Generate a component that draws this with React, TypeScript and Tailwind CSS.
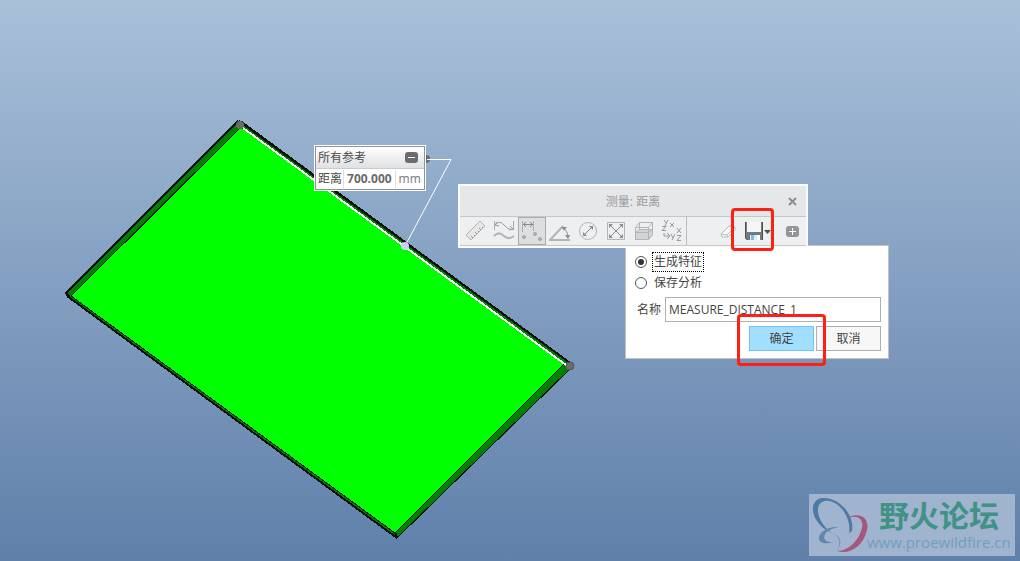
import { useState } from "react";
import type { ReactNode } from "react";
import clsx from "clsx";

type Tool = { id: string; label: string; icon: ReactNode };

const tools: Tool[] = [
  {
    id: "summary",
    label: "汇总",
    icon: (
      <>
        <path d="M1 15 L15 1 L20 6 L6 20 Z" fill="#e6e6e7" />
        <path d="M8 18l-2-2M10 16l-1-1M12 14l-2-2M14 12l-1-1M16 10l-2-2M18 8l-1-1" stroke="#999" />
      </>
    ),
  },
  {
    id: "length",
    label: "长度",
    icon: (
      <>
        <path d="M1.500 1v9M20.500 1v9" stroke="#aaa" />
        <path d="M2 5c4-4 6-3 9 0s5 5 9 4M2 5l4 1M2 5l2-3M20 9l-3-3M20 9l-4 1" stroke="#999" />
        <path d="M1 16c4-4 7-3 10 0s6 3 10 0" strokeWidth="2" />
      </>
    ),
  },
  {
    id: "distance",
    label: "距离",
    icon: (
      <>
        <path d="M1.500 1v11M12.500 1v10" stroke="#aaa" />
        <path d="M2 4.500h10M5 2L2.500 4.500 5 7M9 2l2.500 2.500L9 7" stroke="#888" />
        <g fill="#b5b5b5" stroke="#a4a4a4">
          <circle cx="3" cy="17" r="1.500" />
          <circle cx="14" cy="14" r="1.500" />
          <circle cx="19" cy="19" r="1.500" />
        </g>
      </>
    ),
  },
  {
    id: "angle",
    label: "角度",
    icon: (
      <>
        <path d="M14 6L1 20h20" strokeWidth="2" stroke="#b4b4b4" />
        <path d="M13 8c4 1 6 5 6 10" stroke="#8c8c8c" />
        <path d="M13 7h5l-3 4zM16 15h5l-2 4z" fill="#8c8c8c" stroke="none" />
      </>
    ),
  },
  {
    id: "diameter",
    label: "直径",
    icon: (
      <>
        <circle cx="11" cy="11" r="8.500" />
        <path d="M7 15l8-8" stroke="#888" />
        <path d="M6 16v-4l4 4zM16 6v4l-4-4z" fill="#8c8c8c" stroke="none" />
      </>
    ),
  },
  {
    id: "area",
    label: "面积",
    icon: (
      <>
        <path d="M2.500 2.500h17v17h-17z" />
        <path d="M5 5l12 12M17 5L5 17" stroke="#888" />
        <path d="M4 4h4L4 8zM18 4v4l-4-4zM4 18v-4l4 4zM18 18h-4l4-4z" fill="#8c8c8c" stroke="none" />
      </>
    ),
  },
  {
    id: "volume",
    label: "体积",
    icon: (
      <>
        <path d="M2.500 12.500l4-3h13v5l-4 5h-13z" fill="#d3d4d5" />
        <path d="M2.500 7.500h13v12h-13zM2.500 7.500l4-5h13l-4 5M19.500 2.500v12l-4 5M6.500 2.500v7M2.500 12.500h13l4-3" />
      </>
    ),
  },
  {
    id: "transform",
    label: "变换",
    icon: (
      <>
        <path d="M3 0l2 3M7 0L4 6M1 6.500h4l-4 4h4M9 3l4 4M13 3L9 7" stroke="#999" />
        <path d="M3 13v3h5M6 13l3 3-3 3M10 14l2 4M14 14l-3 6M16 8l4 5M20 8l-4 5M16 15.500h4l-4 5h4" stroke="#999" />
      </>
    ),
  },
];

const ToolIcon = ({ children }: { children: ReactNode }) => (
  <svg width="22" height="22" viewBox="0 0 22 22" fill="none" stroke="#b4b4b5" aria-hidden="true">
    {children}
  </svg>
);

const Plate = () => (
  <svg className="absolute top-0 left-0" width="1020" height="561" viewBox="0 0 1020 561" aria-hidden="true">
    <g shapeRendering="crispEdges" stroke="#101010">
      <path d="M238 121L241 121L571 363L571 368L397 538L67 296L66 293Z" fill="#008000" />
      <path d="M241 127L564 364L395 533L71 296Z" fill="#00ff00" />
      <path d="M238 121L66 293L70 297M239 121L570 363M67 296L397 538" fill="none" strokeWidth="2" />
      <path d="M395 532L397 538" fill="none" strokeWidth="2" />
    </g>
    <path d="M243 128L566 365" stroke="#fff" strokeWidth="2" shapeRendering="crispEdges" />
    <circle cx="240" cy="125" r="4" fill="#6b6b6b" />
    <circle cx="570" cy="366" r="4" fill="#6b6b6b" stroke="#555" />
    <circle cx="426" cy="159" r="4" fill="#6b6b6b" />
    <path d="M427 159.500H451L405 246" fill="none" stroke="#fff" />
    <circle cx="405" cy="246" r="4" fill="#d2ccfa" />
  </svg>
);

const ResultLabel = () => (
  <section className="absolute top-[145px] left-[314px] border border-white bg-white text-[#4a4a4a]">
    <div className="border border-[#8f9499]">
      <header className="flex h-[22px] items-center justify-between border-b border-[#c8cacc] bg-linear-to-b from-white to-[#dfe1e3] pr-1.5 pl-0.5">
        <span>所有参考</span>
        <button aria-label="折叠" className="flex h-[11px] w-[13px] items-center justify-center rounded-[3px] bg-[#6b6b70]">
          <span className="h-px w-[7px] bg-white" />
        </button>
      </header>
      <div className="flex h-5 items-center">
        <span className="pr-px pl-0.5">距离</span>
        <span className="border-x border-[#dcdfe3] px-[3px] font-bold text-[#6a6a6a]">700.000</span>
        <span className="px-[3px] text-[#777]">mm</span>
      </div>
    </div>
  </section>
);

const MeasureToolbar = ({ onToggleSave }: { onToggleSave: () => void }) => {
  const [activeTool, setActiveTool] = useState("distance");

  return (
    <section className="absolute top-[184px] left-[458px] w-[350px] border-2 border-[#fafbfc] bg-[#eeeff1]">
      <header className="relative flex h-[31px] items-center justify-center border-b border-[#c4c6c8] bg-[#e6e7e9] pt-px text-[#9b9b9b]">
        <h1>测量: 距离</h1>
        <button aria-label="关闭" className="absolute right-2 flex size-3 items-center justify-center">
          <svg width="9" height="9" viewBox="0 0 9 9" stroke="#8d8d8f" strokeWidth="2" aria-hidden="true">
            <path d="M1 1l7 7M8 1L1 8" />
          </svg>
        </button>
      </header>
      <div className="flex h-[29px] items-center border-b border-[#c4c6c8] pl-0.5">
        {tools.map((tool) => (
          <button
            key={tool.id}
            aria-label={tool.label}
            onClick={() => setActiveTool(tool.id)}
            className={clsx(
              "flex size-7 items-center justify-center border",
              activeTool === tool.id ? "border-[#a9abad] bg-[#dcdee0]" : "border-transparent"
            )}
          >
            <ToolIcon>{tool.icon}</ToolIcon>
          </button>
        ))}
        <div className="h-full w-px bg-[#b9bbbd]" />
        <div className="flex flex-1 items-center justify-end pr-[7px]">
          <button aria-label="清除">
            <svg width="16" height="16" viewBox="0 0 16 16" fill="#f6f6f7" stroke="#bcbcbe" aria-hidden="true">
              <path d="M1 11l8-8 6 1v3l-7 7H2z" />
              <path d="M1 11l6 1 8-8-6-1z" />
              <path d="M7 12l1 2" />
            </svg>
          </button>
          <button aria-label="保存" onClick={onToggleSave} className="ml-2 flex items-center">
            <svg width="28" height="20" viewBox="0 0 28 20" aria-hidden="true">
              <path d="M1 1h18v18H3l-2-2z" fill="#77787b" />
              <path d="M1 1h1v16l2 2H3l-2-2zM18 1h1v18h-1z" fill="#505153" />
              <path d="M3 1h14v10H3z" fill="#f4f5f6" />
              <path d="M5 13h11v6H5z" fill="#d9ecf7" />
              <path d="M5 13h11v1H6v5H5z" fill="#4a7fa5" />
              <path d="M7 14h3v5H7z" fill="#8fb9d3" />
              <path d="M13 14h3v5h-3z" fill="#fff" />
              <path d="M20 9h7l-3.500 4z" fill="#505153" />
            </svg>
          </button>
          <button aria-label="展开" className="ml-3.5 flex h-[11px] w-[13px] items-center justify-center rounded-[3px] bg-[#949597]">
            <svg width="9" height="9" viewBox="0 0 9 9" stroke="#fff" aria-hidden="true">
              <path d="M1 4.500h7M4.500 1v7" />
            </svg>
          </button>
        </div>
      </div>
    </section>
  );
};

const SavePopup = () => {
  const [mode, setMode] = useState("feature");
  const [name, setName] = useState("MEASURE_DISTANCE_1");

  const radioClass =
    "size-3 shrink-0 appearance-none rounded-full border border-[#555] bg-white p-0.5 checked:bg-[#333] checked:bg-clip-content";

  return (
    <form
      onSubmit={(e) => e.preventDefault()}
      className="absolute top-[245px] left-[625px] w-[264px] border border-[#c0c2c4] bg-white pt-1.5 pr-[7px] pb-[7px] pl-[9px] text-[#444]"
    >
      <label className="flex h-5 items-center gap-[5px]">
        <input
          type="radio"
          name="mode"
          checked={mode === "feature"}
          onChange={() => setMode("feature")}
          className={radioClass}
        />
        <span className="border border-dotted border-black px-px">生成特征</span>
      </label>
      <label className="flex h-[21px] items-center gap-[5px]">
        <input
          type="radio"
          name="mode"
          checked={mode === "analysis"}
          onChange={() => setMode("analysis")}
          className={radioClass}
        />
        <span className="border border-transparent px-px">保存分析</span>
      </label>
      <div className="mt-1 flex items-center gap-1 pl-0.5">
        <label htmlFor="feature-name">名称</label>
        <input
          id="feature-name"
          value={name}
          onChange={(e) => setName(e.target.value)}
          className="h-[25px] min-w-0 flex-1 border border-[#b0b0b0] px-[3px] outline-none"
        />
      </div>
      <div className="mt-1 flex justify-end gap-0.5">
        <button type="submit" className="h-[25px] w-[65px] border border-[#6cc5fa] bg-[#a2dfff]">
          确定
        </button>
        <button type="button" className="h-[25px] w-[65px] border border-[#b0b0b0] bg-[#f7f7f7]">
          取消
        </button>
      </div>
    </form>
  );
};

const Watermark = () => (
  <aside className="absolute right-[5px] bottom-[5px] flex h-[62px] w-[206px] bg-[#a0b3cf]">
    <svg width="60" height="62" viewBox="0 0 60 62" className="shrink-0" aria-hidden="true">
      <path d="M43 37C46 20 29 3 14 4C-2 5 1 30 23 39C8 29 4 9 16 7C28 5 43 22 40 39Z" fill="#4d79a5" />
      <path d="M36 25C48 17 61 22 58 36C54 53 40 61 28 57C40 57 50 46 53 34C55 24 47 20 36 25Z" fill="#a4587d" />
      <path d="M30 33C18 32 9 39 10 45C11 50 18 50 24 48C11 49 12 36 30 33Z" fill="#6388af" />
      <path d="M23 39C31 42 32 49 28 57C34 48 32 42 23 39Z" fill="#7890b3" />
    </svg>
    <div className="-ml-0.5 flex flex-col gap-0.5 pt-1">
      <strong className="ml-3 font-['Noto_Sans_CJK_SC',sans-serif] text-[30px] leading-8 font-bold text-[#409284]">
        野火论坛
      </strong>
      <a href="#" className="text-[15px] leading-5 text-[#709ebb]">
        www.proewildfire.cn
      </a>
    </div>
  </aside>
);

const App = () => {
  const [saveOpen, setSaveOpen] = useState(true);

  return (
    <main className="relative min-h-screen w-full overflow-hidden bg-linear-to-b from-[#a9c0d9] to-[#6080aa] font-['Open_Sans','Noto_Sans_CJK_SC',sans-serif] text-[12px] leading-[18px]">
      <Plate />
      <ResultLabel />
      {saveOpen && <SavePopup />}
      <MeasureToolbar onToggleSave={() => setSaveOpen(!saveOpen)} />
      <div className="pointer-events-none absolute top-[208px] left-[731px] h-[43px] w-[43px] rounded border-3 border-[#ff2015]" />
      <div className="pointer-events-none absolute top-[314px] left-[737px] h-[52px] w-[89px] rounded border-3 border-[#ff2015]" />
      <Watermark />
    </main>
  );
};

export default App;
